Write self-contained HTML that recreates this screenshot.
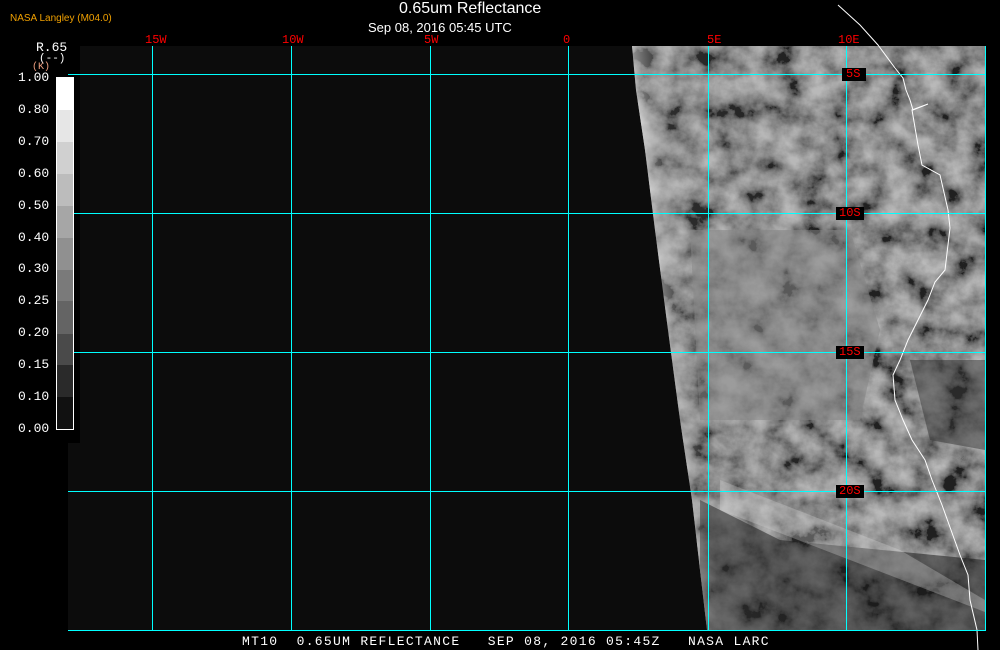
<!DOCTYPE html>
<html><head><meta charset="utf-8"><style>
html,body{margin:0;padding:0;background:#000;width:1000px;height:650px;overflow:hidden;font-family:"Liberation Mono","DejaVu Sans Mono",monospace;}
.t{position:absolute;white-space:pre}
</style></head><body>
<svg width="1000" height="650" style="position:absolute;left:0;top:0" xmlns="http://www.w3.org/2000/svg">
<defs>
<filter id="cl" x="0" y="0" width="100%" height="100%">
<feTurbulence type="fractalNoise" baseFrequency="0.035 0.04" numOctaves="5" seed="3"/>
<feColorMatrix type="matrix" values="1.8 0 0 0 -0.45  1.8 0 0 0 -0.45  1.8 0 0 0 -0.45  0 0 0 0 1"/>
</filter>
<linearGradient id="edge" x1="0" x2="1" y1="0" y2="0">
<stop offset="0" stop-color="#fff" stop-opacity="0.95"/>
<stop offset="0.08" stop-color="#ddd" stop-opacity="0.55"/>
<stop offset="0.22" stop-color="#999" stop-opacity="0.1"/>
<stop offset="1" stop-color="#888" stop-opacity="0"/>
</linearGradient>
<clipPath id="sat"><polygon points="632,46 985,46 985,630 707,630 700,570 692,500 680,420 668,330 655,230 645,150 636,90"/></clipPath>
</defs>
<rect x="68" y="46" width="917" height="584" fill="#0c0c0c"/>
<rect x="0" y="46" width="80" height="397" fill="#000"/>
<g clip-path="url(#sat)">
<rect x="620" y="46" width="370" height="590" filter="url(#cl)"/>
<rect x="620" y="46" width="370" height="590" fill="#505050" opacity="0.4"/>
<polygon points="690,230 850,230 880,330 860,420 700,420" fill="#858585" opacity="0.55"/>
<polygon points="700,500 780,540 985,560 985,630 700,630" fill="#1a1a1a" opacity="0.55"/>
<polygon points="720,480 900,550 985,600 985,612 720,510" fill="#ddd" opacity="0.3"/>
<polygon points="910,360 985,360 985,450 930,440" fill="#333" opacity="0.5"/>
<rect x="625" y="46" width="200" height="590" fill="url(#edge)" transform="skewX(6) translate(-12,0)"/>
</g>
<polyline points="838,5 860,25 878,45 895,68 903,78 906,90 910,100 913,110 928,104 912,110 918,145 922,165 940,175 948,210 950,228 945,270 935,282 928,300 918,320 908,340 900,360 893,375 895,400 903,420 912,440 925,460 932,480 942,505 951,530 960,555 968,575 970,600 977,630 978,650" fill="none" stroke="#fff" stroke-width="1"/>
<g stroke="#00ffff" stroke-width="1" shape-rendering="crispEdges">
<line x1="152.5" y1="46" x2="152.5" y2="630"/><line x1="291.5" y1="46" x2="291.5" y2="630"/>
<line x1="430.5" y1="46" x2="430.5" y2="630"/><line x1="568.5" y1="46" x2="568.5" y2="630"/>
<line x1="708.5" y1="46" x2="708.5" y2="630"/><line x1="846.5" y1="46" x2="846.5" y2="630"/>
<line x1="985.5" y1="46" x2="985.5" y2="630"/>
<line x1="68" y1="74.5" x2="986" y2="74.5"/><line x1="68" y1="213.5" x2="986" y2="213.5"/>
<line x1="68" y1="352.5" x2="986" y2="352.5"/><line x1="68" y1="491.5" x2="986" y2="491.5"/>
<line x1="68" y1="630.5" x2="986" y2="630.5"/>
</g>
<g fill="#000">
<rect x="842" y="68" width="24" height="13"/>
<rect x="836" y="207" width="28" height="13"/>
<rect x="836" y="346" width="28" height="13"/>
<rect x="836" y="485" width="28" height="13"/>
</g>
<g shape-rendering="crispEdges">
<rect x="56" y="77" width="18" height="33" fill="#fff"/>
<rect x="56" y="110" width="18" height="32" fill="#e6e6e6"/>
<rect x="56" y="142" width="18" height="32" fill="#d0d0d0"/>
<rect x="56" y="174" width="18" height="32" fill="#bcbcbc"/>
<rect x="56" y="206" width="18" height="32" fill="#a6a6a6"/>
<rect x="56" y="238" width="18" height="32" fill="#909090"/>
<rect x="56" y="270" width="18" height="31" fill="#7a7a7a"/>
<rect x="56" y="301" width="18" height="33" fill="#646464"/>
<rect x="56" y="334" width="18" height="31" fill="#4a4a4a"/>
<rect x="56" y="365" width="18" height="32" fill="#2a2a2a"/>
<rect x="56" y="397" width="18" height="33" fill="#111"/>
<rect x="56.5" y="77.5" width="17" height="352" fill="none" stroke="#fff"/>
</g>
</svg>
<div class="t" style="left:10px;top:13px;font-family:'Liberation Sans',sans-serif;font-size:10px;color:#f0a000">NASA Langley (M04.0)</div>
<div class="t" style="left:399px;top:0px;font-family:'Liberation Sans',sans-serif;font-size:16px;color:#fff">0.65um Reflectance</div>
<div class="t" style="left:368px;top:20px;font-family:'Liberation Sans',sans-serif;font-size:13px;color:#fff">Sep 08, 2016 05:45 UTC</div>
<div class="t" style="left:36px;top:40px;font-size:13px;color:#fff">R.65</div>
<div class="t" style="left:39px;top:53px;font-size:11px;color:#fff">(--)</div>
<div class="t" style="left:32px;top:62px;font-size:10px;color:#f0a080">(K)</div>
<div class="t" style="left:18px;top:62px;font-size:13px;color:#fff;line-height:31.9px">1.00
0.80
0.70
0.60
0.50
0.40
0.30
0.25
0.20
0.15
0.10
0.00</div>
<div style="font-size:12px;color:#f00">
<div class="t" style="left:145px;top:33px">15W</div>
<div class="t" style="left:282px;top:33px">10W</div>
<div class="t" style="left:424px;top:33px">5W</div>
<div class="t" style="left:563px;top:33px">0</div>
<div class="t" style="left:707px;top:33px">5E</div>
<div class="t" style="left:838px;top:33px">10E</div>
<div class="t" style="left:846px;top:67px">5S</div>
<div class="t" style="left:839px;top:206px">10S</div>
<div class="t" style="left:839px;top:345px">15S</div>
<div class="t" style="left:839px;top:484px">20S</div>
</div>
<div class="t" style="left:242px;top:634px;font-size:13px;color:#fff;letter-spacing:1.3px">MT10  0.65UM REFLECTANCE   SEP 08, 2016 05:45Z   NASA LARC</div>
</body></html>
